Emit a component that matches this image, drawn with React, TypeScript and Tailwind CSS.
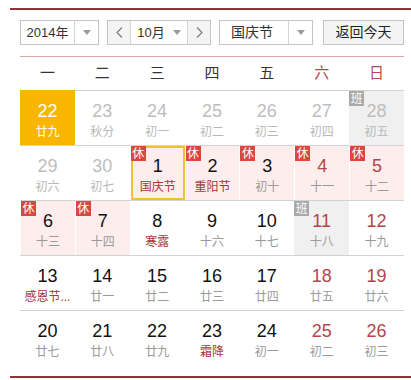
import { ReactNode } from 'react'

type Day = {
  d: number
  lunar: string
  muted?: boolean
  red?: boolean
  fest?: boolean
  badge?: '休' | '班'
  today?: boolean
  selected?: boolean
}

const font = { fontFamily: '"Liberation Sans", Arial, "Noto Sans CJK SC", sans-serif' }

const weeks: Day[][] = [
  [
    { d: 22, lunar: '廿九', today: true },
    { d: 23, lunar: '秋分', muted: true },
    { d: 24, lunar: '初一', muted: true },
    { d: 25, lunar: '初二', muted: true },
    { d: 26, lunar: '初三', muted: true },
    { d: 27, lunar: '初四', muted: true },
    { d: 28, lunar: '初五', muted: true, badge: '班' },
  ],
  [
    { d: 29, lunar: '初六', muted: true },
    { d: 30, lunar: '初七', muted: true },
    { d: 1, lunar: '国庆节', fest: true, badge: '休', selected: true },
    { d: 2, lunar: '重阳节', fest: true, badge: '休' },
    { d: 3, lunar: '初十', badge: '休' },
    { d: 4, lunar: '十一', red: true, badge: '休' },
    { d: 5, lunar: '十二', red: true, badge: '休' },
  ],
  [
    { d: 6, lunar: '十三', badge: '休' },
    { d: 7, lunar: '十四', badge: '休' },
    { d: 8, lunar: '寒露', fest: true },
    { d: 9, lunar: '十六' },
    { d: 10, lunar: '十七' },
    { d: 11, lunar: '十八', red: true, badge: '班' },
    { d: 12, lunar: '十九', red: true },
  ],
  [
    { d: 13, lunar: '感恩节...', fest: true },
    { d: 14, lunar: '廿一' },
    { d: 15, lunar: '廿二' },
    { d: 16, lunar: '廿三' },
    { d: 17, lunar: '廿四' },
    { d: 18, lunar: '廿五', red: true },
    { d: 19, lunar: '廿六', red: true },
  ],
  [
    { d: 20, lunar: '廿七' },
    { d: 21, lunar: '廿八' },
    { d: 22, lunar: '廿九' },
    { d: 23, lunar: '霜降', fest: true },
    { d: 24, lunar: '初一' },
    { d: 25, lunar: '初二', red: true },
    { d: 26, lunar: '初三', red: true },
  ],
]

function Caret() {
  return (
    <svg width="8" height="5" viewBox="0 0 8 5">
      <path d="M0 0 L8 0 L4 5 Z" fill="#9a9a9a" />
    </svg>
  )
}

function Chevron({ dir }: { dir: 'left' | 'right' }) {
  return (
    <svg width="7" height="11" viewBox="0 0 7 11">
      <path
        d={dir === 'left' ? 'M6 0.5 L1 5.5 L6 10.5' : 'M1 0.5 L6 5.5 L1 10.5'}
        fill="none"
        stroke="#777"
        strokeWidth="1.1"
      />
    </svg>
  )
}

function Box({ className, children }: { className: string; children: ReactNode }) {
  return <div className={`flex h-[25px] border border-[#c4c4c4] bg-white ${className}`}>{children}</div>
}

function Cell({ day }: { day: Day }) {
  let bg = 'bg-white'
  if (day.today) bg = 'bg-[#f9b600] border-t-[#f9b600]'
  else if (day.badge === '休') bg = 'bg-[#fdeded] border-l border-l-white'
  else if (day.badge === '班') bg = 'bg-[#f0f0f0]'

  let numColor = 'text-[#111]'
  if (day.today) numColor = 'text-white'
  else if (day.muted) numColor = 'text-[#bdbdbd]'
  else if (day.red) numColor = 'text-[#b5444b]'

  let lunarColor = 'text-[#9a9a9a]'
  if (day.today) lunarColor = 'text-white'
  else if (day.muted) lunarColor = 'text-[#b8b8b8]'
  else if (day.fest) lunarColor = 'text-[#a8343a]'

  return (
    <div className={`relative flex flex-col items-center border-t border-[#d2d2d2] ${bg}`}>
      {day.selected && <div className="absolute inset-0 border-2 border-[#f0c132]" />}
      {day.badge && (
        <div
          className={`absolute left-0 top-0 flex h-[15px] w-[15px] items-center justify-center text-[12px] leading-none text-white ${
            day.badge === '休' ? 'bg-[#d9473f]' : 'bg-[#a9a9a9]'
          }`}
        >
          {day.badge}
        </div>
      )}
      <div className={`mt-[10px] h-[21px] text-[18px] leading-[21px] ${numColor}`}>{day.d}</div>
      <div className={`mt-[2px] h-[16px] whitespace-nowrap text-[12px] leading-[16px] ${lunarColor}`}>{day.lunar}</div>
    </div>
  )
}

export default function App() {
  const heads = ['一', '二', '三', '四', '五', '六', '日']

  return (
    <div className="h-[380px] w-[411px] overflow-hidden bg-white pt-[8px]" style={font}>
      <div className="ml-[10px] h-[2px] w-[401px] bg-[#8a3636]" />

      <div className="ml-[20px] mt-[10px] flex w-[384px] items-center text-[13px] text-[#333]">
        <Box className="w-[79px]">
          <div className="flex flex-1 items-center justify-center">2014年</div>
          <div className="flex w-[24px] items-center justify-center border-l border-[#d4d4d4]">
            <Caret />
          </div>
        </Box>
        <Box className="ml-[8px] w-[104px]">
          <div className="flex w-[22px] items-center justify-center bg-[#f4f4f4]">
            <Chevron dir="left" />
          </div>
          <div className="flex flex-1 items-center justify-center gap-[8px] border-x border-[#d4d4d4]">
            <span>10月</span>
            <Caret />
          </div>
          <div className="flex w-[22px] items-center justify-center bg-[#f4f4f4]">
            <Chevron dir="right" />
          </div>
        </Box>
        <Box className="ml-[8px] w-[94px]">
          <div className="flex flex-1 items-center pl-[11px] text-[14px]">国庆节</div>
          <div className="flex w-[24px] items-center justify-center border-l border-[#d4d4d4]">
            <Caret />
          </div>
        </Box>
        <Box className="ml-[10px] w-[81px] !bg-[#f4f4f4]">
          <div className="flex flex-1 items-center justify-center text-[14px] text-[#222]">返回今天</div>
        </Box>
      </div>

      <div className="ml-[20px] mt-[11px] h-px w-[384px] bg-[#d7a9a9]" />

      <div className="ml-[20px] grid h-[33px] w-[384px] grid-cols-7 items-center text-[15px]">
        {heads.map((h, i) => (
          <div key={h} className={`text-center ${i >= 5 ? 'text-[#b5494b]' : 'text-[#333]'}`}>
            {h}
          </div>
        ))}
      </div>

      <div className="ml-[20px] grid w-[384px] grid-cols-7 auto-rows-[55px]">
        {weeks.map((w, wi) => w.map((day, di) => <Cell key={`${wi}-${di}`} day={day} />))}
      </div>

      <div className="ml-[10px] mt-[11px] h-[2px] w-[401px] bg-[#8a3636]" />
    </div>
  )
}
